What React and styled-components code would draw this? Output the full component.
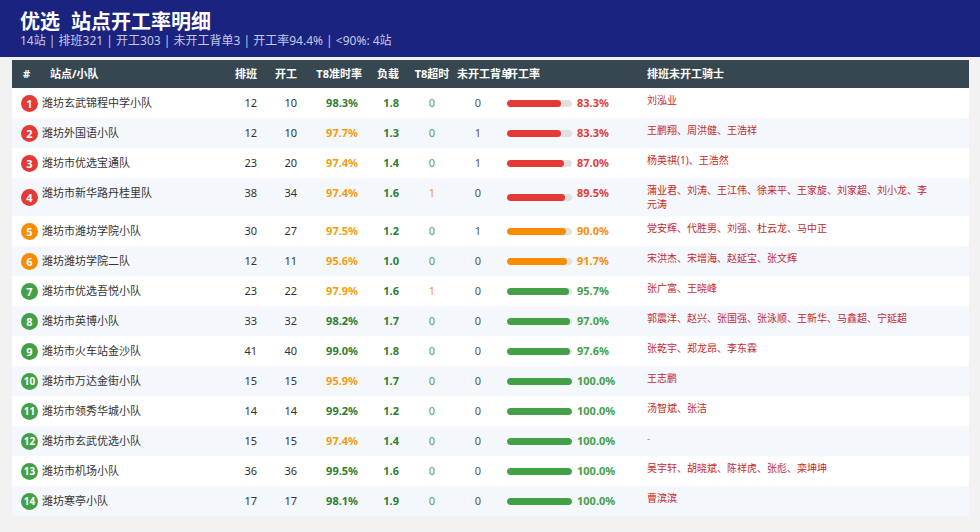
import React from 'react';
import styled, { createGlobalStyle } from 'styled-components';

const GlobalStyle = createGlobalStyle`
    html, body {
        margin: 0;
        padding: 0;
        background: #f2f2f2;
        font-family: "Noto Sans", "Noto Sans CJK SC", sans-serif;
        color: #333;
    }
`

const RED = '#e53935';
const ORANGE = '#fb8c00';
const GREEN = '#43a047';

const COLS = '28px 182px 39px 40px 63px 39px 50px 50px 140px 1fr';

const rows = [
    ['潍坊玄武锦程中学小队', 12, 10, 98.3, 1.8, 0, 0, 83.3, '刘泓业'],
    ['潍坊外国语小队', 12, 10, 97.7, 1.3, 0, 1, 83.3, '王鹏翔、周洪健、王浩祥'],
    ['潍坊市优选宝通队', 23, 20, 97.4, 1.4, 0, 1, 87.0, '杨英祺(1)、王浩然'],
    ['潍坊市新华路丹桂里队', 38, 34, 97.4, 1.6, 1, 0, 89.5, '蒲业君、刘涛、王江伟、徐来平、王家旋、刘家超、刘小龙、李元涛'],
    ['潍坊市潍坊学院小队', 30, 27, 97.5, 1.2, 0, 1, 90.0, '党安辉、代胜男、刘强、杜云龙、马中正'],
    ['潍坊潍坊学院二队', 12, 11, 95.6, 1.0, 0, 0, 91.7, '宋洪杰、宋增海、赵延宝、张文辉'],
    ['潍坊市优选吾悦小队', 23, 22, 97.9, 1.6, 1, 0, 95.7, '张广富、王晓峰'],
    ['潍坊市英博小队', 33, 32, 98.2, 1.7, 0, 0, 97.0, '郭震洋、赵兴、张国强、张泳顺、王新华、马鑫超、宁延超'],
    ['潍坊市火车站金沙队', 41, 40, 99.0, 1.8, 0, 0, 97.6, '张乾宇、郑龙昂、李东霖'],
    ['潍坊市万达金街小队', 15, 15, 95.9, 1.7, 0, 0, 100.0, '王志鹏'],
    ['潍坊市领秀华城小队', 14, 14, 99.2, 1.2, 0, 0, 100.0, '汤智斌、张洁'],
    ['潍坊市玄武优选小队', 15, 15, 97.4, 1.4, 0, 0, 100.0, ''],
    ['潍坊市机场小队', 36, 36, 99.5, 1.6, 0, 0, 100.0, '吴宇轩、胡晓斌、陈祥虎、张彪、栾坤坤'],
    ['潍坊寒亭小队', 17, 17, 98.1, 1.9, 0, 0, 100.0, '曹滨滨'],
]

const rateColor = (r) => (r < 90 ? RED : r < 95 ? ORANGE : GREEN)

const Banner = styled.header`
    background: #1a237e;
    padding: 10px 20px 9px;
    height: 38px;
`
const Title = styled.h1`
    margin: 0;
    color: #fff;
    font-size: 20px;
    font-weight: 700;
    line-height: 24px;
    white-space: nowrap;

    & span {
        margin-right: 11px;
    }
`
const Subtitle = styled.div`
    color: #c5cae9;
    font-size: 12px;
    line-height: 14px;
    white-space: nowrap;
`
const Table = styled.div`
    margin: 3px 11px 0 12px;
    background: #fff;
`
const HeadRow = styled.div`
    display: grid;
    grid-template-columns: ${COLS};
    background: #37474f;
    height: 28px;
`
const Th = styled.div`
    color: #fff;
    font-size: 11px;
    font-weight: 700;
    line-height: 28px;
    white-space: nowrap;
    text-align: ${p => p.$align || 'left'};
    padding: ${p => p.$pad || '0 4px'};
`
const Row = styled.div`
    display: grid;
    grid-template-columns: ${COLS};
    min-height: 30px;
    background: ${p => (p.$alt ? '#f4f7fc' : '#fff')};
`
const Td = styled.div`
    font-size: 11px;
    line-height: 14px;
    padding: ${p => p.$pad || '8px 4px 0'};
    text-align: ${p => p.$align || 'left'};
    color: ${p => p.$color || '#333'};
    font-weight: ${p => (p.$bold ? 700 : 400)};
    white-space: nowrap;
`
const BadgeCell = styled.div`
    align-self: center;
    padding-left: 9px;
`
const Badge = styled.div`
    width: 17px;
    height: 17px;
    border-radius: 50%;
    background: ${p => p.$color};
    color: #fff;
    font-size: ${p => (p.$small ? '10px' : '11px')};
    font-weight: 700;
    display: flex;
    align-items: center;
    justify-content: center;
    line-height: 1;
`
const RateCell = styled.div`
    display: flex;
    padding-left: 4px;
`
const Track = styled.div`
    align-self: center;
    width: 65px;
    height: 7px;
    border-radius: 4px;
    background: #e0e0e0;
    overflow: hidden;
`
const Fill = styled.div`
    height: 100%;
    border-radius: 4px;
    background: ${p => p.$color};
`
const Pct = styled.div`
    margin-left: 5px;
    padding-top: 8px;
    font-size: 11px;
    line-height: 14px;
    font-weight: 700;
    color: ${p => p.$color};
`
const Riders = styled.div`
    padding: 5px 38px 5px 4px;
    font-size: 10px;
    line-height: 14px;
    color: ${p => (p.$empty ? '#999' : '#c62828')};
`

const App = () => (
    <>
        <GlobalStyle />
        <Banner>
            <Title><span>优选</span>站点开工率明细</Title>
            <Subtitle>14站 | 排班321 | 开工303 | 未开工背单3 | 开工率94.4% | &lt;90%: 4站</Subtitle>
        </Banner>
        <Table>
            <HeadRow>
                <Th $pad="0 0 0 11px">#</Th>
                <Th $pad="0 0 0 10px">站点/小队</Th>
                <Th $align="right">排班</Th>
                <Th $align="right">开工</Th>
                <Th $align="right" $pad="0 2px 0 0">T8准时率</Th>
                <Th $align="right">负载</Th>
                <Th $align="center" $pad="0 0 0 8px">T8超时</Th>
                <Th>未开工背单</Th>
                <Th>开工率</Th>
                <Th>排班未开工骑士</Th>
            </HeadRow>
            {rows.map(([name, plan, work, t8, load, late, miss, rate, riders], i) => {
                const c = rateColor(rate)
                return (
                    <Row key={name} $alt={i % 2 === 1}>
                        <BadgeCell>
                            <Badge $color={c} $small={i >= 9}>{i + 1}</Badge>
                        </BadgeCell>
                        <Td $pad="8px 2px 0">{name}</Td>
                        <Td $align="right">{plan}</Td>
                        <Td $align="right">{work}</Td>
                        <Td $align="right" $pad="8px 6px 0 0" $bold $color={t8 >= 98 ? '#2e7d32' : '#f39c12'}>
                            {t8.toFixed(1)}%
                        </Td>
                        <Td $align="right" $bold $color="#2e7d32">{load.toFixed(1)}</Td>
                        <Td $align="center" $pad="8px 0 0 8px" $color={late ? '#f39c12' : '#5a9e5a'}>{late}</Td>
                        <Td $align="center" $color="#555">{miss}</Td>
                        <RateCell>
                            <Track>
                                <Fill $color={c} style={{ width: `${rate}%` }} />
                            </Track>
                            <Pct $color={c}>{rate.toFixed(1)}%</Pct>
                        </RateCell>
                        <Riders $empty={!riders}>{riders || '-'}</Riders>
                    </Row>
                )
            })}
        </Table>
    </>
)

export default App
